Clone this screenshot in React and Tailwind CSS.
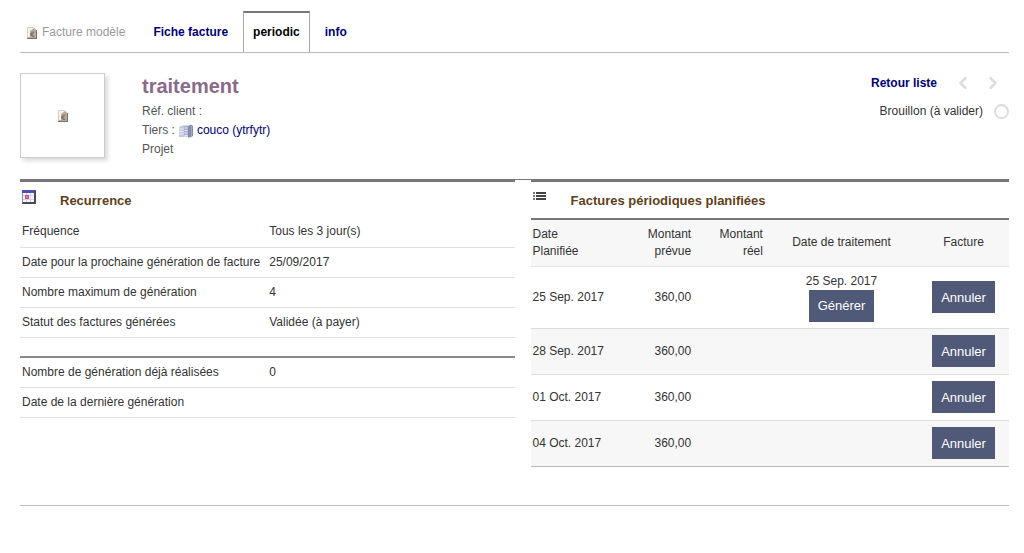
import { ChevronLeft, ChevronRight } from "lucide-react";

const RECURRENCE = [
  { label: "Fréquence", value: "Tous les 3 jour(s)" },
  { label: "Date pour la prochaine génération de facture", value: "25/09/2017" },
  { label: "Nombre maximum de génération", value: "4" },
  { label: "Statut des factures générées", value: "Validée (à payer)" },
];

const HISTORY = [
  { label: "Nombre de génération déjà réalisées", value: "0" },
  { label: "Date de la dernière génération", value: "" },
];

const PLANNED = [
  { date: "25 Sep. 2017", amount: "360,00", processing: "25 Sep. 2017" },
  { date: "28 Sep. 2017", amount: "360,00" },
  { date: "01 Oct. 2017", amount: "360,00" },
  { date: "04 Oct. 2017", amount: "360,00" },
];

function BillIcon() {
  return (
    <svg width="12" height="14" viewBox="0 0 12 14" className="shrink-0" aria-hidden="true">
      <path d="M1.5 1.5h6l3 3v8h-9z" fill="#f4f2ef" stroke="#d2d0cd" />
      <path d="M4 5l4-3 3 3v8H2v-2h2z" fill="#b9aa9b" />
      <path d="M8.3 6.2C6 5.6 5 7 5 8.4s1.2 2.6 3.3 2M4.2 7.8h3.2M4.2 9h3" fill="none" stroke="#7d6d60" />
      <path d="M10.5 4v9M1 12.5h10" stroke="#77706a" />
    </svg>
  );
}

function CompanyIcon() {
  return (
    <svg width="14" height="14" viewBox="0 0 14 14" className="shrink-0" aria-hidden="true">
      <path d="M0 3l5-2v12H0z" fill="#c3c9de" />
      <path d="M5 1.5h4v11H5z" fill="#a5aecb" />
      <path d="M9 2l3-1.5L14 2v10l-3 1.5H9z" fill="#858aa6" />
      <path d="M0 5h4.5M0 7.5h4.5M0 10h4.5M5.5 4h3M5.5 6.5h3M5.5 9h3M5.5 11.5h3" stroke="#e9edf7" />
      <path d="M12.5 2v10" stroke="#a9aabd" />
    </svg>
  );
}

function CalendarIcon() {
  return (
    <svg width="15" height="15" viewBox="0 0 15 15" aria-hidden="true">
      <path d="M0 0h14v14H0z" fill="#b9bbc9" />
      <path d="M1 3h11v9H1z" fill="#f3f3fb" />
      <path d="M0 0h14v3H0z" fill="#4a50b4" />
      <path d="M4.5 3v9M8.5 3v9M1 5.5h11M1 9.5h11" stroke="#d3d3e6" />
      <path d="M3 5h4v4H3z" fill="#c9507d" />
      <path d="M4.5 6.5h1v1h-1z" fill="#fff" />
      <path d="M13 1v12M0 13h14" stroke="#4a4a52" strokeWidth="2" />
      <path d="M.5 3v10" stroke="#8d8d98" />
    </svg>
  );
}

function ListIcon() {
  return (
    <svg width="14" height="9" viewBox="0 0 14 9" className="mt-[2px]" aria-hidden="true">
      <path d="M0 1h2M0 4h2M0 7h2" stroke="#777" strokeWidth="2" />
      <path d="M3 1h10M3 4h10M3 7h10" stroke="#444" strokeWidth="2" />
    </svg>
  );
}

function ActionButton({ children }) {
  return (
    <button type="button" className="h-8 px-[9px] bg-[#505a78] text-white text-[13px]">
      {children}
    </button>
  );
}

function CardTitle({ icon, children }) {
  return (
    <div className="flex items-start h-[35px] border-t-[3px] border-[#777] box-content">
      <div className="w-10 pl-[2px] pt-2">{icon}</div>
      <h2 className="pt-[10px] text-[13px] leading-[18px] font-bold text-[#5f3f1a]">{children}</h2>
    </div>
  );
}

function InfoTable({ rows }) {
  return (
    <table className="w-full table-fixed border-collapse">
      <tbody>
        {rows.map((row) => (
          <tr key={row.label} className="h-[30px] border-b border-[#e0e0e0]">
            <th scope="row" className="w-1/2 px-[2px] text-left font-normal whitespace-nowrap">
              {row.label}
            </th>
            <td className="px-[2px]">{row.value}</td>
          </tr>
        ))}
      </tbody>
    </table>
  );
}

export default function App() {
  return (
    <div className="min-h-screen bg-white pl-5 pr-[15px] pt-[11px] text-[12px] leading-[17px] text-[#333] font-['Liberation_Sans',Arial,sans-serif]">
      {/* Tabs */}
      <nav className="flex items-stretch h-[42px] border-b border-[#bbb]">
        <div className="flex items-center gap-1 pt-[2px] pl-[6px] pr-[19px] text-[#999]">
          <BillIcon />
          <span>Facture modèle</span>
        </div>
        <a href="#fiche" className="flex items-center pt-[2px] px-[9px] font-bold text-[#000078]">
          Fiche facture
        </a>
        <a
          href="#periodic"
          aria-current="page"
          className="flex items-center mx-[6px] px-[9px] border-x border-t-2 border-x-[#aaa] border-t-[#777] font-bold text-black"
        >
          periodic
        </a>
        <a href="#info" className="flex items-center pt-[2px] px-[9px] font-bold text-[#000078]">
          info
        </a>
      </nav>

      {/* Banner */}
      <header className="flex items-start pt-5 pb-5 border-b border-[#777]">
        <div className="flex items-center justify-center size-[85px] border border-[#ccc] shadow-[3px_3px_4px_#ddd]">
          <BillIcon />
        </div>
        <div className="ml-[37px] leading-[19px] text-[#555]">
          <h1 className="mb-[2px] text-[20px] leading-[27px] font-bold text-[#8a6a8a]">traitement</h1>
          <div>Réf. client :</div>
          <div className="flex items-center gap-1">
            <span>Tiers :</span>
            <CompanyIcon />
            <a href="#tiers" className="text-[#000078]">
              couco (ytrfytr)
            </a>
          </div>
          <div>Projet</div>
        </div>
        <div className="ml-auto flex flex-col items-end gap-[10px]">
          <div className="flex items-center gap-4 h-5">
            <a href="#liste" className="font-bold text-[#000078]">
              Retour liste
            </a>
            <div className="flex gap-[10px] pr-[6px] text-[#ddd]">
              <ChevronLeft size={20} strokeWidth={3} />
              <ChevronRight size={20} strokeWidth={3} />
            </div>
          </div>
          <div className="flex items-center gap-[11px]">
            <span>Brouillon (à valider)</span>
            <span className="size-[15px] rounded-full border-2 border-[#ddd]" />
          </div>
        </div>
      </header>

      <main className="-mt-px flex items-start gap-4 pb-[38px] border-b border-[#bbb]">
        <section className="w-1/2">
          <CardTitle icon={<CalendarIcon />}>Recurrence</CardTitle>
          <InfoTable rows={RECURRENCE} />
          <div className="mt-[18px] border-t-2 border-[#888]">
            <InfoTable rows={HISTORY} />
          </div>
        </section>

        <section className="flex-1">
          <CardTitle icon={<ListIcon />}>Factures périodiques planifiées</CardTitle>
          <table className="mt-px w-full table-fixed border-collapse border-t-2 border-b border-t-[#777] border-b-[#bbb]">
            <thead>
              <tr className="h-[47px] bg-[#f7f7f7] border-b border-[#e5e5e5]">
                <th className="w-[17%] px-[2px] text-left font-normal">
                  Date
                  <br />
                  Planifiée
                </th>
                <th className="w-[17%] px-[2px] text-right font-normal">
                  Montant
                  <br />
                  prévue
                </th>
                <th className="w-[15%] px-[2px] text-right font-normal">
                  Montant
                  <br />
                  réel
                </th>
                <th className="w-[32%] px-[2px] font-normal">Date de traitement</th>
                <th className="w-[19%] px-[2px] font-normal">Facture</th>
              </tr>
            </thead>
            <tbody>
              {PLANNED.map((row) => (
                <tr
                  key={row.date}
                  className="h-[46px] border-b border-[#ddd] last:border-[#bbb] even:bg-[#f7f7f7]"
                >
                  <td className="px-[2px]">{row.date}</td>
                  <td className="px-[2px] text-right">{row.amount}</td>
                  <td />
                  <td className="px-[2px] text-center">
                    {row.processing && (
                      <div className="flex flex-col items-center py-[6px]">
                        <span>{row.processing}</span>
                        <ActionButton>Générer</ActionButton>
                      </div>
                    )}
                  </td>
                  <td className="px-[2px] text-center">
                    <ActionButton>Annuler</ActionButton>
                  </td>
                </tr>
              ))}
            </tbody>
          </table>
        </section>
      </main>
    </div>
  );
}
